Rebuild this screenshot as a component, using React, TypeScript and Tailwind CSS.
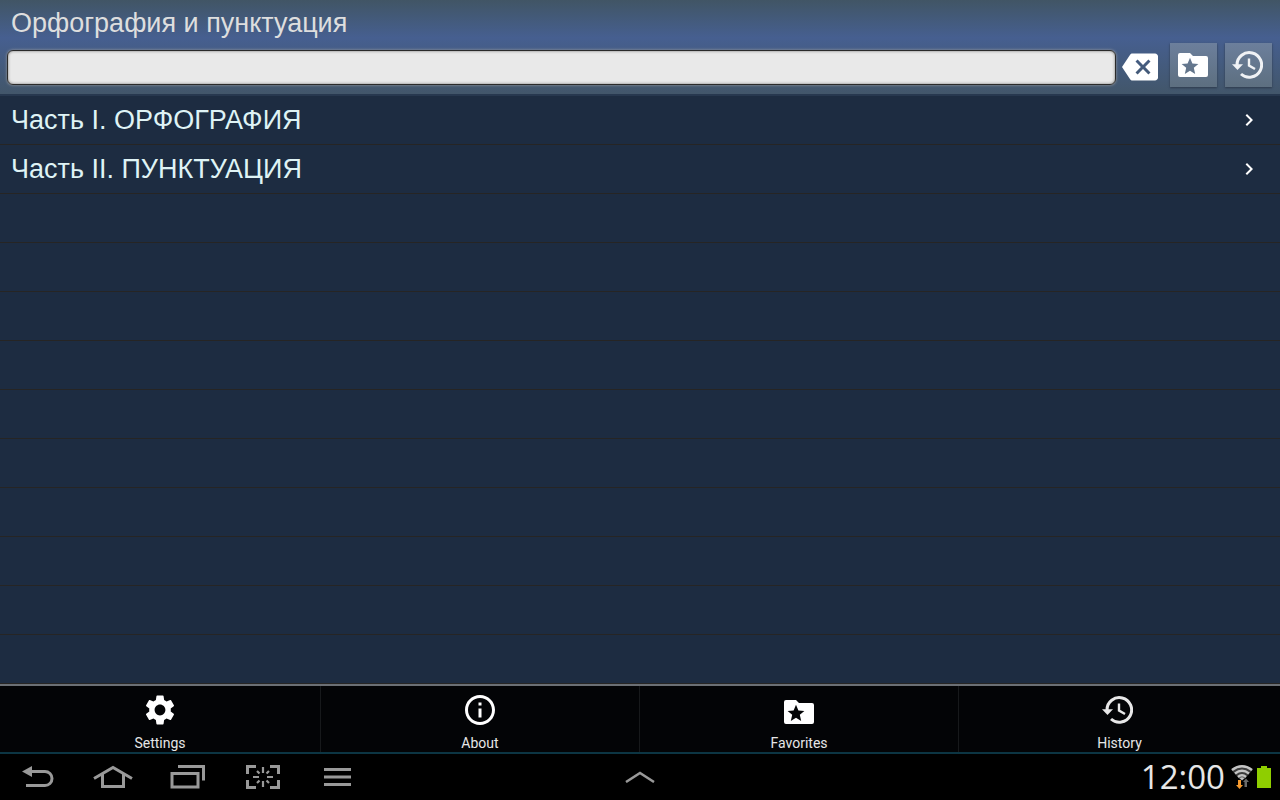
import type { ReactNode } from 'react';
import {
    MdBackspace,
    MdChevronRight,
    MdInfoOutline,
    MdSettings,
} from 'react-icons/md';

const chapters = ['Часть I. ОРФОГРАФИЯ', 'Часть II. ПУНКТУАЦИЯ'];
const emptyRows = Array.from({ length: 10 }, (_, i) => i);

function FolderStarIcon({ className }: { className?: string }) {
    return (
        <svg viewBox="0 0 30 24" fill="currentColor" className={className}>
            <path
                fillRule="evenodd"
                d="M2 0h10l3 3h13a2 2 0 0 1 2 2v17a2 2 0 0 1-2 2H2a2 2 0 0 1-2-2V2a2 2 0 0 1 2-2zM12 4.7L9.6 10.5 3.6 10.9 8.2 14.8 6.8 21 12 17.7 17.2 21 15.8 14.8 20.4 10.9 14.4 10.5z"
            />
        </svg>
    );
}

function HistoryIcon({ className }: { className?: string }) {
    return (
        <svg viewBox="0 0 31 28" fill="none" className={className}>
            <path
                d="M5 14A12.3 12.3 0 1 1 9 23"
                stroke="currentColor"
                strokeWidth="3"
            />
            <path d="M0 13.2h11L5.5 19z" fill="currentColor" />
            <path
                d="M17 7.5v7l6 3.5"
                stroke="currentColor"
                strokeWidth="2.4"
            />
        </svg>
    );
}

function BackIcon() {
    return (
        <svg viewBox="0 0 32 22" fill="none" className="w-8 h-[22px]">
            <path d="M0 5.5L10 0v11z" fill="currentColor" />
            <path
                d="M9 5.5h14a7 7 0 0 1 0 14H4"
                stroke="currentColor"
                strokeWidth="3"
            />
        </svg>
    );
}

function HomeIcon() {
    return (
        <svg viewBox="0 0 40 24" fill="none" className="w-10 h-6">
            <path
                d="M1 13.5L20 2.5 39 13.5M9.5 9.5v12h21v-12"
                stroke="currentColor"
                strokeWidth="3"
            />
        </svg>
    );
}

function RecentIcon() {
    return (
        <svg viewBox="0 0 36 24" fill="none" className="w-9 h-6">
            <path
                d="M8 1.5h25.5v14M2 8.500h26V22H2z"
                stroke="currentColor"
                strokeWidth="3"
            />
        </svg>
    );
}

function CaptureIcon() {
    return (
        <svg viewBox="0 0 34 24" fill="none" className="w-[34px] h-6">
            <path
                d="M10 1.5H1.5V9M24 1.5h8.5V9M10 22.5H1.5V15M24 22.5h8.5V15"
                stroke="currentColor"
                strokeWidth="3"
            />
            <path
                d="M17 2v6M17 16v6M7 12h6M21 12h6M11 6l2.5 2.5M23 6l-2.5 2.5M11 18l2.5-2.5M23 18l-2.5-2.5"
                stroke="currentColor"
                strokeWidth="2.2"
            />
        </svg>
    );
}

function MenuIcon() {
    return (
        <svg viewBox="0 0 27 18" className="w-[27px] h-[18px]">
            <path
                d="M0 1.5h27M0 9h27M0 16.5h27"
                stroke="currentColor"
                strokeWidth="3"
            />
        </svg>
    );
}

function WifiIcon() {
    return (
        <svg viewBox="0 0 22 24" fill="none" className="w-[22px] h-6">
            <path d="M0 4.5Q11-4 22 4.5L13 14.5h-4z" fill="#3c3c3c" />
            <g stroke="#c4c4c4" strokeWidth="2.4">
                <path d="M1 5Q11-2.5 21 5" />
                <path d="M4 8.5Q11 3 18 8.5" />
                <path d="M7 12Q11 8.5 15 12" />
            </g>
            <path d="M8.5 13q2.5-1.5 5 0L11 15.5z" fill="#c4c4c4" />
            <path d="M7 15h3v5h2l-3.5 4L5 20h2z" fill="#f79a2e" />
            <path d="M13.5 22v-5H12l3-3.5 3 3.5h-2v5z" fill="#6a6a6a" />
        </svg>
    );
}

function BatteryIcon() {
    return (
        <svg viewBox="0 0 14 22" className="w-3.5 h-[22px]">
            <path d="M4 0h6v2h4v20H0V2h4z" fill="#8fce00" />
        </svg>
    );
}

function ToolButton({ label, children }: { label: string; children: ReactNode }) {
    return (
        <button
            type="button"
            aria-label={label}
            className="flex items-center justify-center w-[47px] h-11 pr-0.5 bg-linear-to-b from-[#6c7f9c] to-[#5d6f80] shadow-[0_1px_2px_#2c3a4c]"
        >
            {children}
        </button>
    );
}

const menuItems = [
    { label: 'Settings', icon: <MdSettings className="size-9" /> },
    { label: 'About', icon: <MdInfoOutline className="size-9" /> },
    { label: 'Favorites', icon: <FolderStarIcon className="w-[30px] h-6 mt-1" /> },
    { label: 'History', icon: <HistoryIcon className="w-[31px] h-7 mr-1 text-[#e8e8e8]" /> },
];

const navItems = [
    { label: 'Back', icon: <BackIcon /> },
    { label: 'Home', icon: <HomeIcon /> },
    { label: 'Recent apps', icon: <RecentIcon /> },
    { label: 'Screen capture', icon: <CaptureIcon /> },
    { label: 'Menu', icon: <MenuIcon /> },
];

export default function App() {
    return (
        <div className="flex flex-col h-screen overflow-hidden bg-[#1d2c41] font-['Liberation_Sans',Arial,sans-serif]">
            <header className="shrink-0 bg-linear-to-b from-[#415565] via-[#465f90] via-40% to-[#42566a] border-b-2 border-[#27384f]">
                <h1 className="px-[11px] pt-[7px] text-[27px] leading-8 text-[#dedede]">
                    Орфография и пунктуация
                </h1>
                <div className="flex items-end pl-[7px] pr-2 pt-1 pb-[7px]">
                    <input
                        type="text"
                        aria-label="Поиск"
                        className="flex-1 min-w-0 h-[35px] mb-0.5 px-2 text-xl text-black bg-[#e9e9e9] border border-[#2b2b2b] rounded-md outline-none shadow-[0_0_3px_#a0a0a0,inset_0_0_3px_#777]"
                    />
                    <button type="button" aria-label="Очистить" className="ml-1.5 mb-0.5 text-white">
                        <MdBackspace className="size-9" />
                    </button>
                    <div className="flex gap-2 ml-3">
                        <ToolButton label="Избранное">
                            <FolderStarIcon className="w-[30px] h-6 text-white" />
                        </ToolButton>
                        <ToolButton label="История">
                            <HistoryIcon className="w-[31px] h-7 text-[#f0f2f5]" />
                        </ToolButton>
                    </div>
                </div>
            </header>

            <main className="flex-1 min-h-0 overflow-hidden">
                <ul>
                    {chapters.map((chapter) => (
                        <li key={chapter} className="border-b border-[#262524]">
                            <a
                                href="#"
                                className="flex items-center justify-between h-12 pl-[11px] pr-[19px] text-[27px] text-[#dff3f5]"
                            >
                                {chapter}
                                <MdChevronRight className="size-6 text-white" />
                            </a>
                        </li>
                    ))}
                    {emptyRows.map((row) => (
                        <li key={row} className="h-[49px] border-b border-[#262524]" />
                    ))}
                </ul>
            </main>

            <nav className="grid grid-cols-[321fr_319fr_319fr_321fr] shrink-0 h-[70px] bg-[#030406] border-t-2 border-t-[#6b6f74] border-b-2 border-b-[#0c3543] divide-x divide-[#17191b]">
                {menuItems.map((item) => (
                    <button
                        key={item.label}
                        type="button"
                        className="flex flex-col items-center justify-between pt-1.5 text-white"
                    >
                        <span className="flex items-center justify-center h-9">{item.icon}</span>
                        <span className="text-sm leading-[18px] text-[#e6e6e6] font-[Roboto,sans-serif]">
                            {item.label}
                        </span>
                    </button>
                ))}
            </nav>

            <footer className="grid grid-cols-[1fr_auto_1fr] items-center shrink-0 h-[46px] bg-black text-[#999]">
                <div className="flex">
                    {navItems.map((item) => (
                        <button
                            key={item.label}
                            type="button"
                            aria-label={item.label}
                            className="flex items-center justify-center w-[75px]"
                        >
                            {item.icon}
                        </button>
                    ))}
                </div>
                <button type="button" aria-label="Expand">
                    <svg viewBox="0 0 30 12" fill="none" className="w-[30px] h-3">
                        <path d="M1 11L15 2l14 9" stroke="currentColor" strokeWidth="2.5" />
                    </svg>
                </button>
                <div className="flex items-center justify-end pr-[9px] text-[#e6e6e6]">
                    <span className="text-[33px] leading-9 font-['Open_Sans',sans-serif]">12:00</span>
                    <span className="flex items-center gap-1 ml-1.5">
                        <WifiIcon />
                        <BatteryIcon />
                    </span>
                </div>
            </footer>
        </div>
    );
}
